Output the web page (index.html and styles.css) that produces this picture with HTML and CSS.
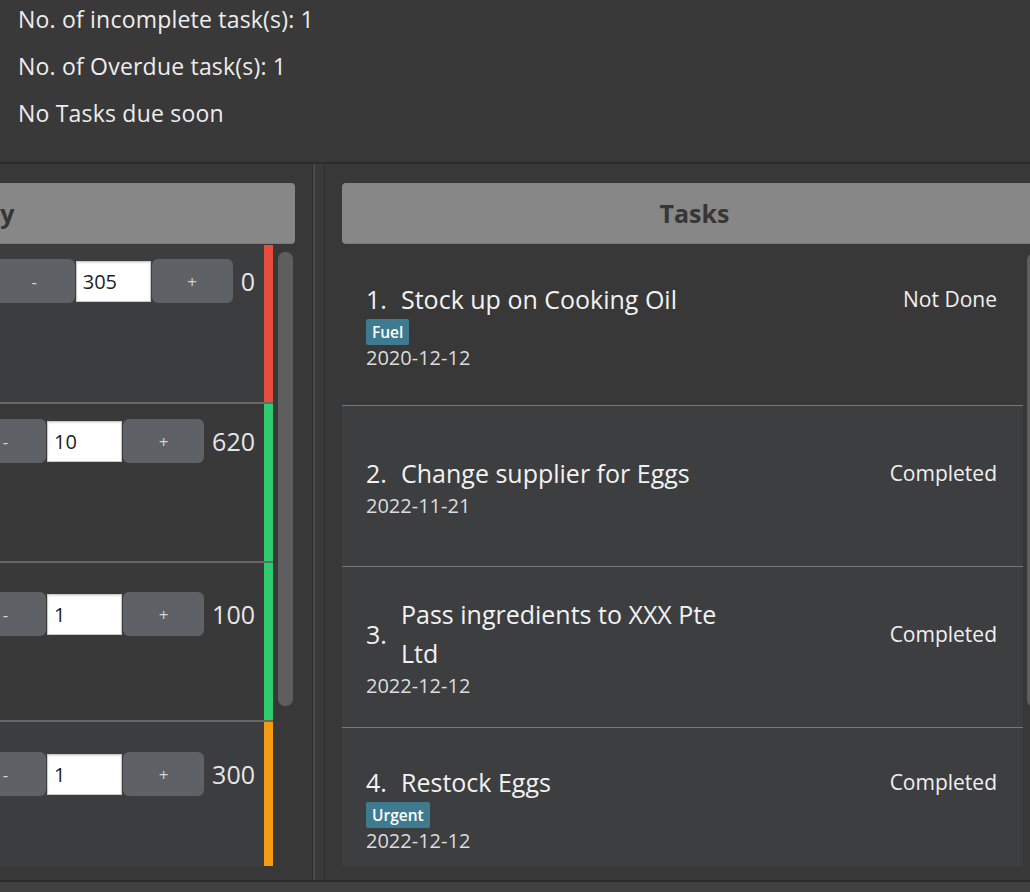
FILE: index.html
```html
<!DOCTYPE html>
<html lang="en">
<head>
<meta charset="utf-8">
<title>Tasks</title>
<link rel="stylesheet" href="styles.css">
</head>
<body>
<div class="app">
  <section class="summary">
    <p class="summary-line">No. of incomplete task(s): 1</p>
    <p class="summary-line">No. of Overdue task(s): 1</p>
    <p class="summary-line">No Tasks due soon</p>
  </section>

  <main class="split">
    <section class="pane-inventory">
      <div class="inventory-inner">
        <div class="pane-header">Inventory</div>
        <div class="list-wrap">
          <ul class="card-list">
            <li class="inv-card inv-card-1">
              <div class="inv-body">
                <div class="stepper">
                  <button class="step-btn">-</button>
                  <input class="step-input" value="305">
                  <button class="step-btn">+</button>
                </div>
                <span class="inv-qty">0</span>
              </div>
              <span class="inv-bar bar-red"></span>
            </li>
            <li class="inv-card inv-card-2">
              <div class="inv-body">
                <div class="stepper">
                  <button class="step-btn">-</button>
                  <input class="step-input" value="10">
                  <button class="step-btn">+</button>
                </div>
                <span class="inv-qty">620</span>
              </div>
              <span class="inv-bar bar-green"></span>
            </li>
            <li class="inv-card inv-card-3">
              <div class="inv-body">
                <div class="stepper">
                  <button class="step-btn">-</button>
                  <input class="step-input" value="1">
                  <button class="step-btn">+</button>
                </div>
                <span class="inv-qty">100</span>
              </div>
              <span class="inv-bar bar-green"></span>
            </li>
            <li class="inv-card inv-card-4">
              <div class="inv-body">
                <div class="stepper">
                  <button class="step-btn">-</button>
                  <input class="step-input" value="1">
                  <button class="step-btn">+</button>
                </div>
                <span class="inv-qty">300</span>
              </div>
              <span class="inv-bar bar-orange"></span>
            </li>
          </ul>
          <div class="scrollbar scrollbar-inventory"></div>
        </div>
      </div>
    </section>

    <div class="divider"></div>

    <section class="pane-tasks">
      <div class="pane-header">Tasks</div>
      <div class="list-wrap">
        <ul class="card-list">
          <li class="task-card task-card-overdue">
            <div class="task-head">
              <span class="task-index">1.</span>
              <span class="task-title">Stock up on Cooking Oil</span>
              <span class="task-status">Not Done</span>
            </div>
            <div class="task-tags"><span class="tag">Fuel</span></div>
            <div class="task-date">2020-12-12</div>
          </li>
          <li class="task-card">
            <div class="task-head">
              <span class="task-index">2.</span>
              <span class="task-title">Change supplier for Eggs</span>
              <span class="task-status">Completed</span>
            </div>
            <div class="task-date">2022-11-21</div>
          </li>
          <li class="task-card">
            <div class="task-head">
              <span class="task-index">3.</span>
              <span class="task-title">Pass ingredients to XXX Pte Ltd</span>
              <span class="task-status">Completed</span>
            </div>
            <div class="task-date">2022-12-12</div>
          </li>
          <li class="task-card">
            <div class="task-head">
              <span class="task-index">4.</span>
              <span class="task-title">Restock Eggs</span>
              <span class="task-status">Completed</span>
            </div>
            <div class="task-tags"><span class="tag">Urgent</span></div>
            <div class="task-date">2022-12-12</div>
          </li>
        </ul>
        <div class="scrollbar scrollbar-tasks"></div>
      </div>
    </section>
  </main>

  <footer class="statusbar"></footer>
</div>
</body>
</html>
```

FILE: styles.css
```css
* {
  box-sizing: border-box;
}

html,
body {
  margin: 0;
  padding: 0;
}

body {
  background: #393939;
  font-family: "Open Sans", "Noto Sans", sans-serif;
  overflow: hidden;
}

.app {
  width: 1030px;
  height: 892px;
  overflow: hidden;
  display: flex;
  flex-direction: column;
  background: #393939;
}

/* ---------- summary ---------- */
.summary {
  flex: none;
  height: 164px;
  padding: 4px 18px 0;
  display: flex;
  flex-direction: column;
  gap: 17px;
  background: #393939;
  border-bottom: 2px solid #2c2c2c;
}

.summary-line {
  margin: 0;
  font-size: 23px;
  line-height: 30px;
  letter-spacing: 0.2px;
  color: #ededed;
}

/* ---------- split pane ---------- */
.split {
  flex: none;
  height: 718px;
  display: flex;
  border-bottom: 2px solid #2b2b2b;
  background: #383838;
}

.pane-inventory {
  flex: none;
  width: 313px;
  display: flex;
  justify-content: flex-end;
  overflow: hidden;
  border-right: 1px solid #2d2d2d;
}

.inventory-inner {
  flex: none;
  width: 700px;
  padding: 19px 17px 14px 0;
  display: flex;
  flex-direction: column;
}

.divider {
  flex: none;
  width: 11px;
  background: #3a3a3a;
  border-left: 2px solid #4a4a4a;
}

.pane-tasks {
  flex: none;
  width: 740px;
  padding: 19px 17px 14px;
  display: flex;
  flex-direction: column;
  border-left: 1px solid #2d2d2d;
}

.pane-header {
  flex: none;
  height: 61px;
  display: flex;
  align-items: center;
  justify-content: center;
  background: #878787;
  border-radius: 4px;
  border-bottom: 1px solid #7b7b7b;
  font-size: 25px;
  font-weight: 700;
  color: #363636;
}

.list-wrap {
  flex: 1;
  min-height: 0;
  margin-top: 1px;
  display: flex;
  overflow: hidden;
}

.card-list {
  flex: 1;
  min-width: 0;
  margin: 0;
  padding: 0;
  list-style: none;
  overflow: hidden;
}

.scrollbar {
  flex: none;
  width: 15px;
  height: 454px;
  border-radius: 7px;
  background: #5e5e5e;
}

.scrollbar-inventory {
  margin: 7px 2px 0 5px;
}

.scrollbar-tasks {
  margin: 8px 5px 0 4px;
}

/* ---------- inventory cards ---------- */
.inv-card {
  height: 159px;
  display: flex;
  background: #3c3d3f;
  border-bottom: 2px solid #676767;
}

.inv-card-2,
.inv-card-3 {
  background: #39393a;
}

.inv-body {
  flex: 1;
  display: flex;
  justify-content: flex-end;
  align-items: flex-start;
  padding-right: 9px;
}

.inv-card-1 .inv-body { padding-top: 14px; }
.inv-card-2 .inv-body { padding-top: 15px; }
.inv-card-3 .inv-body { padding-top: 29px; }
.inv-card-4 .inv-body { padding-top: 30px; }

.stepper {
  display: flex;
  align-items: center;
  gap: 1px;
}

.step-btn {
  width: 81px;
  height: 44px;
  padding: 0;
  border: 0;
  border-radius: 6px;
  background: #5e6165;
  color: #d4d4d4;
  font-family: "Open Sans", sans-serif;
  font-size: 17px;
}

.step-input {
  width: 75px;
  height: 41px;
  padding: 0 0 0 6px;
  border: 1px solid #c9c9c9;
  background: #ffffff;
  box-shadow: inset 0 1px 2px rgba(0, 0, 0, 0.12);
  color: #1e1e1e;
  font-family: "Open Sans", sans-serif;
  font-size: 20px;
  outline: none;
}

.inv-qty {
  margin-left: 8px;
  font-size: 25px;
  line-height: 44px;
  color: #e6e6e6;
}

.inv-bar {
  flex: none;
  width: 9px;
}

.bar-red { background: #e74c3c; }
.bar-green { background: #2ecc71; }
.bar-orange { background: #f39c12; }

/* ---------- task cards ---------- */
.task-card {
  height: 161px;
  display: flex;
  flex-direction: column;
  justify-content: center;
  padding: 0 26px 0 24px;
  background: #3d3e40;
  border-bottom: 1px solid #777777;
}

.task-card-overdue {
  background: #383838;
}

.task-head {
  display: flex;
  align-items: center;
}

.task-index {
  flex: none;
  width: 35px;
  font-size: 25px;
  line-height: 39px;
  color: #f2f2f2;
}

.task-title {
  max-width: 345px;
  font-size: 25px;
  line-height: 39px;
  color: #f2f2f2;
}

.task-status {
  margin-left: auto;
  font-size: 21px;
  color: #f0f0f0;
}

.task-tags {
  display: flex;
  align-items: center;
  gap: 4px;
  height: 26px;
}

.tag {
  padding: 0 6px;
  border-radius: 2px;
  background: #3e7b91;
  color: #ffffff;
  font-size: 15.5px;
  font-weight: 600;
  line-height: 26px;
}

.task-date {
  font-size: 20px;
  line-height: 26px;
  color: #dcdcdc;
}

/* ---------- status bar ---------- */
.statusbar {
  flex: 1;
  background: #414141;
}
```
